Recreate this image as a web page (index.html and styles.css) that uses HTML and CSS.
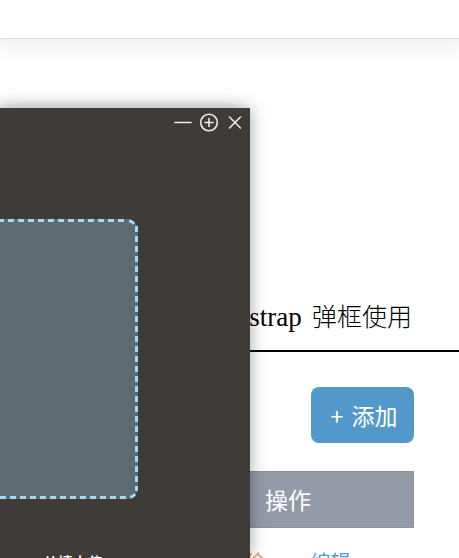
FILE: index.html
```html
<!DOCTYPE html>
<html lang="zh-CN">
<head>
<meta charset="utf-8">
<title>Bootstrap 弹框使用</title>
<link rel="stylesheet" href="styles.css">
</head>
<body>
<header class="topbar"></header>
<main class="page">
  <h1 class="title"><span class="latin">Bootstrap</span> 弹框使用</h1>
  <section class="content">
    <button class="add" type="button"><span class="plus">+</span>添加</button>
    <table class="records">
      <thead><tr><th scope="col">操作</th></tr></thead>
      <tbody><tr><td><div class="actions"><a class="remove" href="#">删除</a><a class="edit" href="#">编辑</a></div></td></tr></tbody>
    </table>
  </section>
</main>
<section class="dialog" role="dialog" aria-label="上传">
  <div class="controls">
    <button type="button" aria-label="最小化"><svg viewBox="0 0 20 20"><path d="M2 10.5H18"/></svg></button>
    <button type="button" aria-label="最大化"><svg viewBox="0 0 20 20"><circle cx="10" cy="10.5" r="8.3"/><path d="M6 10.5H14M10 6.5V14.5"/></svg></button>
    <button type="button" aria-label="关闭"><svg viewBox="0 0 20 20"><path d="M4.5 5L15.5 16M15.5 5L4.5 16"/></svg></button>
  </div>
  <div class="dropzone"><svg viewBox="0 0 138 280" aria-hidden="true"><path d="M-2 1.5H126"/><path d="M129 1.8Q133 2.5 135 6"/><path d="M136.5 7V272"/><path d="M135 275Q133 278 130 278.2"/><path d="M0 278.5H127"/></svg></div>
  <p class="hint">从墙上传</p>
</section>
</body>
</html>
```
FILE: styles.css
```css
* { box-sizing: border-box; }
body {
  margin: 0;
  height: 100vh;
  overflow: hidden;
  background: #fff;
  color: #000;
  font-family: "Noto Sans CJK SC", sans-serif;
}
.topbar {
  height: 39px;
  border-bottom: 1px solid #ddd;
  box-shadow: 0 -10px 28px 12px rgba(0, 0, 0, .1);
}
.title {
  margin: 0;
  padding: 256px 47px 0 0;
  height: 313px;
  border-bottom: 2px solid #000;
  text-align: right;
  font: 300 25px/44px "Liberation Serif", "Noto Sans CJK SC", serif;
  white-space: nowrap;
}
.latin {
  margin-right: 4px;
  font-size: 27px;
}
.content {
  display: flex;
  flex-direction: column;
  align-items: flex-end;
  gap: 28px;
  padding: 35px 45px 0 0;
}
.add {
  display: flex;
  align-items: center;
  justify-content: center;
  gap: 8px;
  width: 103px;
  height: 56px;
  padding: 0 0 0 3px;
  border: 0;
  border-radius: 8px;
  background: #5298ca;
  color: #fff;
  font: 400 23px "Noto Sans CJK SC", sans-serif;
}
.records { width: 260px; border-collapse: collapse; }
.records th {
  height: 56px;
  padding: 0 102px 2px 0;
  border: 1px solid #89919c;
  background: #939ba7;
  color: #fff;
  font-size: 23px;
  font-weight: 400;
  line-height: 34px;
  text-align: right;
}
.records td { padding: 19px 63px 0 0; }
.actions {
  display: flex;
  justify-content: flex-end;
  gap: 46px;
  font-size: 20px;
  line-height: 30px;
}
.actions a { text-decoration: none; }
.remove { color: #e89b6b; }
.edit { color: #4f9bcd; }
.dialog {
  position: absolute;
  top: 108px;
  bottom: 0;
  left: 0;
  width: 250px;
  background: #3f3b36;
  box-shadow: -12px 0 16px rgba(0, 0, 0, .1), 0 0 16px rgba(0, 0, 0, .35);
}
.controls {
  display: flex;
  justify-content: flex-end;
  gap: 6px;
  padding: 4px 5px 0 0;
}
.controls button {
  width: 20px;
  height: 20px;
  padding: 0;
  border: 0;
  background: none;
}
.controls svg {
  display: block;
  fill: none;
  stroke: #eee;
  stroke-width: 1.6;
  stroke-linecap: round;
}
.dropzone {
  height: 280px;
  margin: 87px 112px 0 0;
  border-radius: 0 12px 12px 0;
  background: #5e6b71;
}
.dropzone svg {
  display: block;
  width: 100%;
  height: 100%;
  fill: none;
  stroke: #a3d9ff;
  stroke-width: 3;
  stroke-dasharray: 6 4;
}
.hint {
  margin: 51px 0 0;
  padding-left: 43px;
  color: #fff;
  font-size: 15px;
  font-weight: 500;
  line-height: 24px;
}
```
